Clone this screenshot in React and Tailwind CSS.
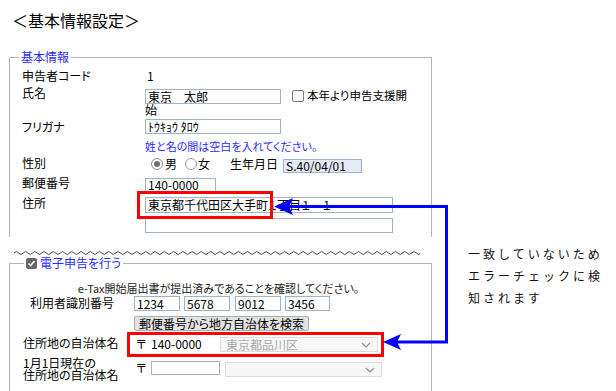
import React from "react";

// plain text box (readonly look)
const Box = ({ className = "", bg = "bg-white", children }) => (
  <div
    className={`flex shrink-0 items-center whitespace-nowrap border border-[#9fb2cc] px-[2px] text-[12px] leading-[10px] ${bg} ${className}`}
  >
    {children}
  </div>
);

const Chevron = () => (
  <svg width="10" height="6" viewBox="0 0 10 6" className="shrink-0">
    <polyline points="1,1 5,5 9,1" fill="none" stroke="#8e8e8e" strokeWidth="1.2" />
  </svg>
);

const Select = ({ className = "", children }) => (
  <div
    className={`flex shrink-0 items-center justify-between whitespace-nowrap border border-[#dcdcdc] bg-[#f7f7f7] pl-[5px] pr-[6px] text-[12px] leading-[10px] text-[#a8a8a8] ${className}`}
  >
    <span>{children}</span>
    <Chevron />
  </div>
);

const Wave = () => {
  const p = 9.25;
  let d = "M0 3";
  for (let i = 0; i < 44; i++) d += ` q ${p / 4} -3 ${p / 2} 0 t ${p / 2} 0`;
  return (
    <svg width="406" height="6" viewBox="0 0 406 6" className="ml-[14px] mt-[13px] block">
      <path d={d} fill="none" stroke="#444" strokeWidth="1" />
    </svg>
  );
};

export default function App() {
  return (
    <div className="relative h-[391px] w-[616px] overflow-hidden bg-white font-['Noto_Sans_CJK_JP','Noto_Sans',sans-serif] text-[12px] text-black [font-feature-settings:'palt']">
      <div className="flex">
        <div className="w-[432px] shrink-0">
          <h1 className="ml-[12px] mt-[10px] text-[16px] leading-[20px] [font-feature-settings:normal]">
            ＜基本情報設定＞
          </h1>

          <fieldset className="ml-[9px] mt-[20px] h-[187px] w-[423px] border border-b-0 border-[#b4b4b4]">
            <legend className="ml-[9px] px-[2px] text-[12px] leading-[14px] text-[#2b2bff]">基本情報</legend>
            <div className="pl-[12px]">
              <div className="mt-[4px] flex h-[16px] leading-[16px]">
                <span className="w-[123px] shrink-0">申告者コード</span>
                <span className="pl-[2px]">1</span>
              </div>

              <div className="flex h-[18px] items-start">
                <span className="mt-[1px] w-[123px] shrink-0 leading-[16px]">氏名</span>
                <Box className="mt-[5px] h-[15px] w-[136px]">東京　太郎</Box>
                <span className="ml-[11px] mt-[6px] size-[12px] shrink-0 rounded-[2px] border border-[#7a7a7a] bg-white" />
                <span className="ml-[3px] mt-[3px] whitespace-nowrap text-[11.5px] leading-[16px]">本年より申告支援開</span>
              </div>
              <div className="mt-[2px] h-[14px] pl-[123px] leading-[12px]">始</div>

              <div className="flex h-[16px] items-start">
                <span className="mt-[1px] w-[123px] shrink-0 leading-[16px]">フリガナ</span>
                <Box className="mt-[1px] h-[15px] w-[136px]">ﾄｳｷｮｳ ﾀﾛｳ</Box>
              </div>
              <div className="mt-[4px] h-[16px] pl-[123px] text-[11px] leading-[16px] text-[#2b2bff]">
                姓と名の間は空白を入れてください。
              </div>

              <div className="flex h-[19px] items-start">
                <span className="mt-[1px] w-[123px] shrink-0 leading-[16px]">性別</span>
                <span className="ml-[6px] mt-[4px] flex size-[12px] shrink-0 items-center justify-center rounded-full border border-[#8a8a8a] bg-white">
                  <span className="size-[6px] rounded-full bg-[#6e6e6e]" />
                </span>
                <span className="ml-[2px] mt-[2px] leading-[16px]">男</span>
                <span className="ml-[8px] mt-[4px] size-[12px] shrink-0 rounded-full border border-[#9a9a9a] bg-white" />
                <span className="ml-[1px] mt-[2px] leading-[16px]">女</span>
                <span className="ml-[20px] mt-[2px] leading-[16px]">生年月日</span>
                <Box bg="bg-[#e3ebf8]" className="ml-[5px] mt-[5px] h-[14px] w-[79px]">S.40/04/01</Box>
              </div>

              <div className="flex h-[21px] items-start">
                <span className="mt-[2px] w-[123px] shrink-0 leading-[16px]">郵便番号</span>
                <Box className="mt-[5px] h-[14px] w-[71px]">140-0000</Box>
              </div>

              <div className="flex h-[20px] items-start">
                <span className="mt-[1px] w-[123px] shrink-0 leading-[16px]">住所</span>
                <Box className="mt-[3px] h-[16px] w-[248px]">東京都千代田区大手町１丁目１－１</Box>
              </div>
              <Box className="ml-[123px] mt-[4px] h-[15px] w-[248px]" />
            </div>
          </fieldset>

          <Wave />

          <fieldset className="ml-[9px] h-[140px] w-[423px] border border-b-0 border-[#b4b4b4]">
            <legend className="ml-[14px] flex items-center px-[2px] text-[12px] leading-[14px] text-[#2b2bff]">
              <span className="flex size-[11px] items-center justify-center rounded-[2px] bg-[#666]">
                <svg width="9" height="9" viewBox="0 0 9 9">
                  <polyline points="1.5,4.5 3.6,6.6 7.5,2" fill="none" stroke="#fff" strokeWidth="1.6" />
                </svg>
              </span>
              <span className="ml-[3px]">電子申告を行う</span>
            </legend>

            <div className="mt-[10px] pr-[4px] text-center text-[11px] leading-[16px] text-[#222]">
              e-Tax開始届出書が提出済みであることを確認してください。
            </div>

            <div className="flex h-[16px] items-start pl-[13px]">
              <span className="mt-[1px] w-[111px] shrink-0 pl-[7px] leading-[12px]">利用者識別番号</span>
              <Box className="h-[15px] w-[46px]">1234</Box>
              <Box className="ml-[4px] h-[15px] w-[46px]">5678</Box>
              <Box className="ml-[5px] h-[15px] w-[46px]">9012</Box>
              <Box className="ml-[4px] h-[15px] w-[45px]">3456</Box>
            </div>

            <div className="mt-[4px] pl-[124px]">
              <button className="flex h-[15px] w-[175px] items-center justify-center rounded-[2px] border border-[#adadad] bg-[#e3e3e3] text-[12px] leading-[11px]">
                郵便番号から地方自治体を検索
              </button>
            </div>

            <div className="flex h-[26px] items-start pl-[13px]">
              <span className="mt-[4px] w-[111px] shrink-0 leading-[16px]">住所地の自治体名</span>
              <span className="ml-[2px] mt-[5px] w-[15px] shrink-0 leading-[16px]">〒</span>
              <span className="mt-[5px] w-[69px] shrink-0 leading-[16px]">140-0000</span>
              <Select className="mt-[6px] h-[15px] w-[158px]">東京都品川区</Select>
            </div>

            <div className="flex items-start pl-[13px]">
              <span className="w-[111px] shrink-0 leading-[12px]">
                1月1日現在の
                <br />
                住所地の自治体名
              </span>
              <span className="ml-[2px] mt-[3px] w-[15px] shrink-0 leading-[16px]">〒</span>
              <Box className="mt-[4px] h-[14px] w-[69px]" />
              <Select className="ml-[5px] mt-[5px] h-[15px] w-[157px]" />
            </div>
          </fieldset>
        </div>

        <div className="pl-[36px] pt-[243px] text-[12px] leading-[22px] tracking-[3px] text-[#111] [font-feature-settings:normal]">
          <p>一致していないため</p>
          <p>エラーチェックに検</p>
          <p>知されます</p>
        </div>
      </div>

      {/* highlight boxes */}
      <div className="pointer-events-none absolute left-[137px] top-[191px] h-[28px] w-[136px] border-[3px] border-[#ff0000]" />
      <div className="pointer-events-none absolute left-[127px] top-[332px] h-[25px] w-[257px] border-[3px] border-[#ff0000]" />

      {/* arrows */}
      <svg className="pointer-events-none absolute left-0 top-0" width="616" height="391" viewBox="0 0 616 391">
        <polyline
          points="289,206.5 446.5,206.5 446.5,342 397,342"
          fill="none"
          stroke="#0000ff"
          strokeWidth="3"
        />
        <polygon points="274,206.5 293,198 289,206.5 293,215" fill="#0000ff" />
        <polygon points="383,342 401,334 397,342 401,350" fill="#0000ff" />
      </svg>
    </div>
  );
}
